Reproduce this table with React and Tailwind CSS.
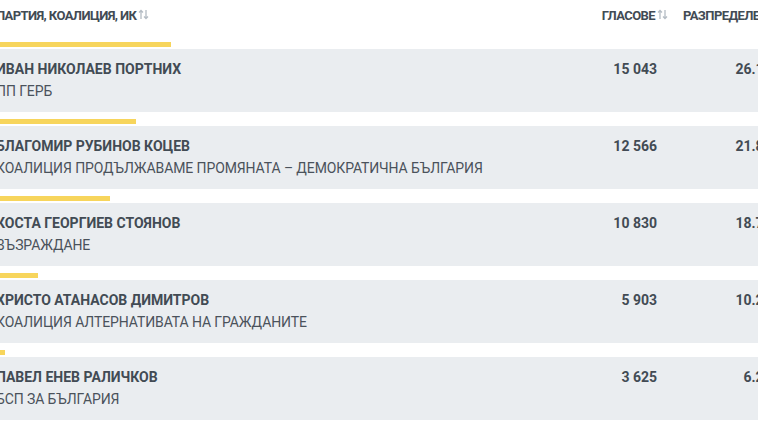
import React from "react";

const rows = [
  { name: "ИВАН НИКОЛАЕВ ПОРТНИХ", party: "ПП ГЕРБ", votes: "15 043", pct: "26.10%", bar: 171 },
  { name: "БЛАГОМИР РУБИНОВ КОЦЕВ", party: "КОАЛИЦИЯ ПРОДЪЛЖАВАМЕ ПРОМЯНАТА – ДЕМОКРАТИЧНА БЪЛГАРИЯ", votes: "12 566", pct: "21.80%", bar: 136 },
  { name: "КОСТА ГЕОРГИЕВ СТОЯНОВ", party: "ВЪЗРАЖДАНЕ", votes: "10 830", pct: "18.79%", bar: 110 },
  { name: "ХРИСТО АТАНАСОВ ДИМИТРОВ", party: "КОАЛИЦИЯ АЛТЕРНАТИВАТА НА ГРАЖДАНИТЕ", votes: "5 903", pct: "10.24%", bar: 38 },
  { name: "ПАВЕЛ ЕНЕВ РАЛИЧКОВ", party: "БСП ЗА БЪЛГАРИЯ", votes: "3 625", pct: "6.29%", bar: 5 },
];

function SortIcon() {
  return (
    <svg width="11" height="11" viewBox="0 0 11 11" className="ml-[2px] mb-[3px] shrink-0" fill="none" stroke="#b4bcc4" strokeWidth="1.3">
      <path d="M3 10V1.5M1 3.5L3 1.5L5 3.5" />
      <path d="M8 1V9.5M6 7.5L8 9.5L10 7.5" />
    </svg>
  );
}

export default function App() {
  return (
    <div className="w-[758px] h-[426px] overflow-hidden bg-white text-[#424b54]" style={{ fontFamily: "Roboto, 'Noto Sans', sans-serif" }}>
      <div className="flex h-[31px] items-center text-[13px] font-bold tracking-[-0.6px]">
        <div className="flex w-[561px] shrink-0 items-center ml-[-4px]">
          <span className="whitespace-nowrap">ПАРТИЯ, КОАЛИЦИЯ, ИК</span>
          <SortIcon />
        </div>
        <div className="flex w-[111px] shrink-0 items-center justify-end">
          <span className="whitespace-nowrap">ГЛАСОВЕ</span>
          <SortIcon />
        </div>
        <div className="ml-[15px] w-[120px] shrink-0 whitespace-nowrap">РАЗПРЕДЕЛЕНИЕ</div>
      </div>
      <div className="mt-[11px] flex flex-col">
        {rows.map((r, i) => (
          <div key={i} className="mb-[7px]">
            <div className="h-[5px] bg-[#f7d55c] mb-[2px]" style={{ width: r.bar }} />
            <div className="flex h-[63px] bg-[#eaedf0] pt-[10px]">
              <div className="w-[561px] shrink-0 ml-[-4px]">
                <div className="text-[14px] font-bold leading-[20px] whitespace-nowrap">{r.name}</div>
                <div className="text-[14px] leading-[24px] whitespace-nowrap text-[#4a525b] tracking-[-0.1px]">{r.party}</div>
              </div>
              <div className="w-[111px] shrink-0 pr-[11px] text-right text-[14px] font-bold leading-[20px] whitespace-nowrap">{r.votes}</div>
              <div className="ml-[15px] w-[99px] shrink-0 text-right text-[14px] font-bold leading-[20px] whitespace-nowrap">{r.pct}</div>
            </div>
          </div>
        ))}
      </div>
    </div>
  );
}
